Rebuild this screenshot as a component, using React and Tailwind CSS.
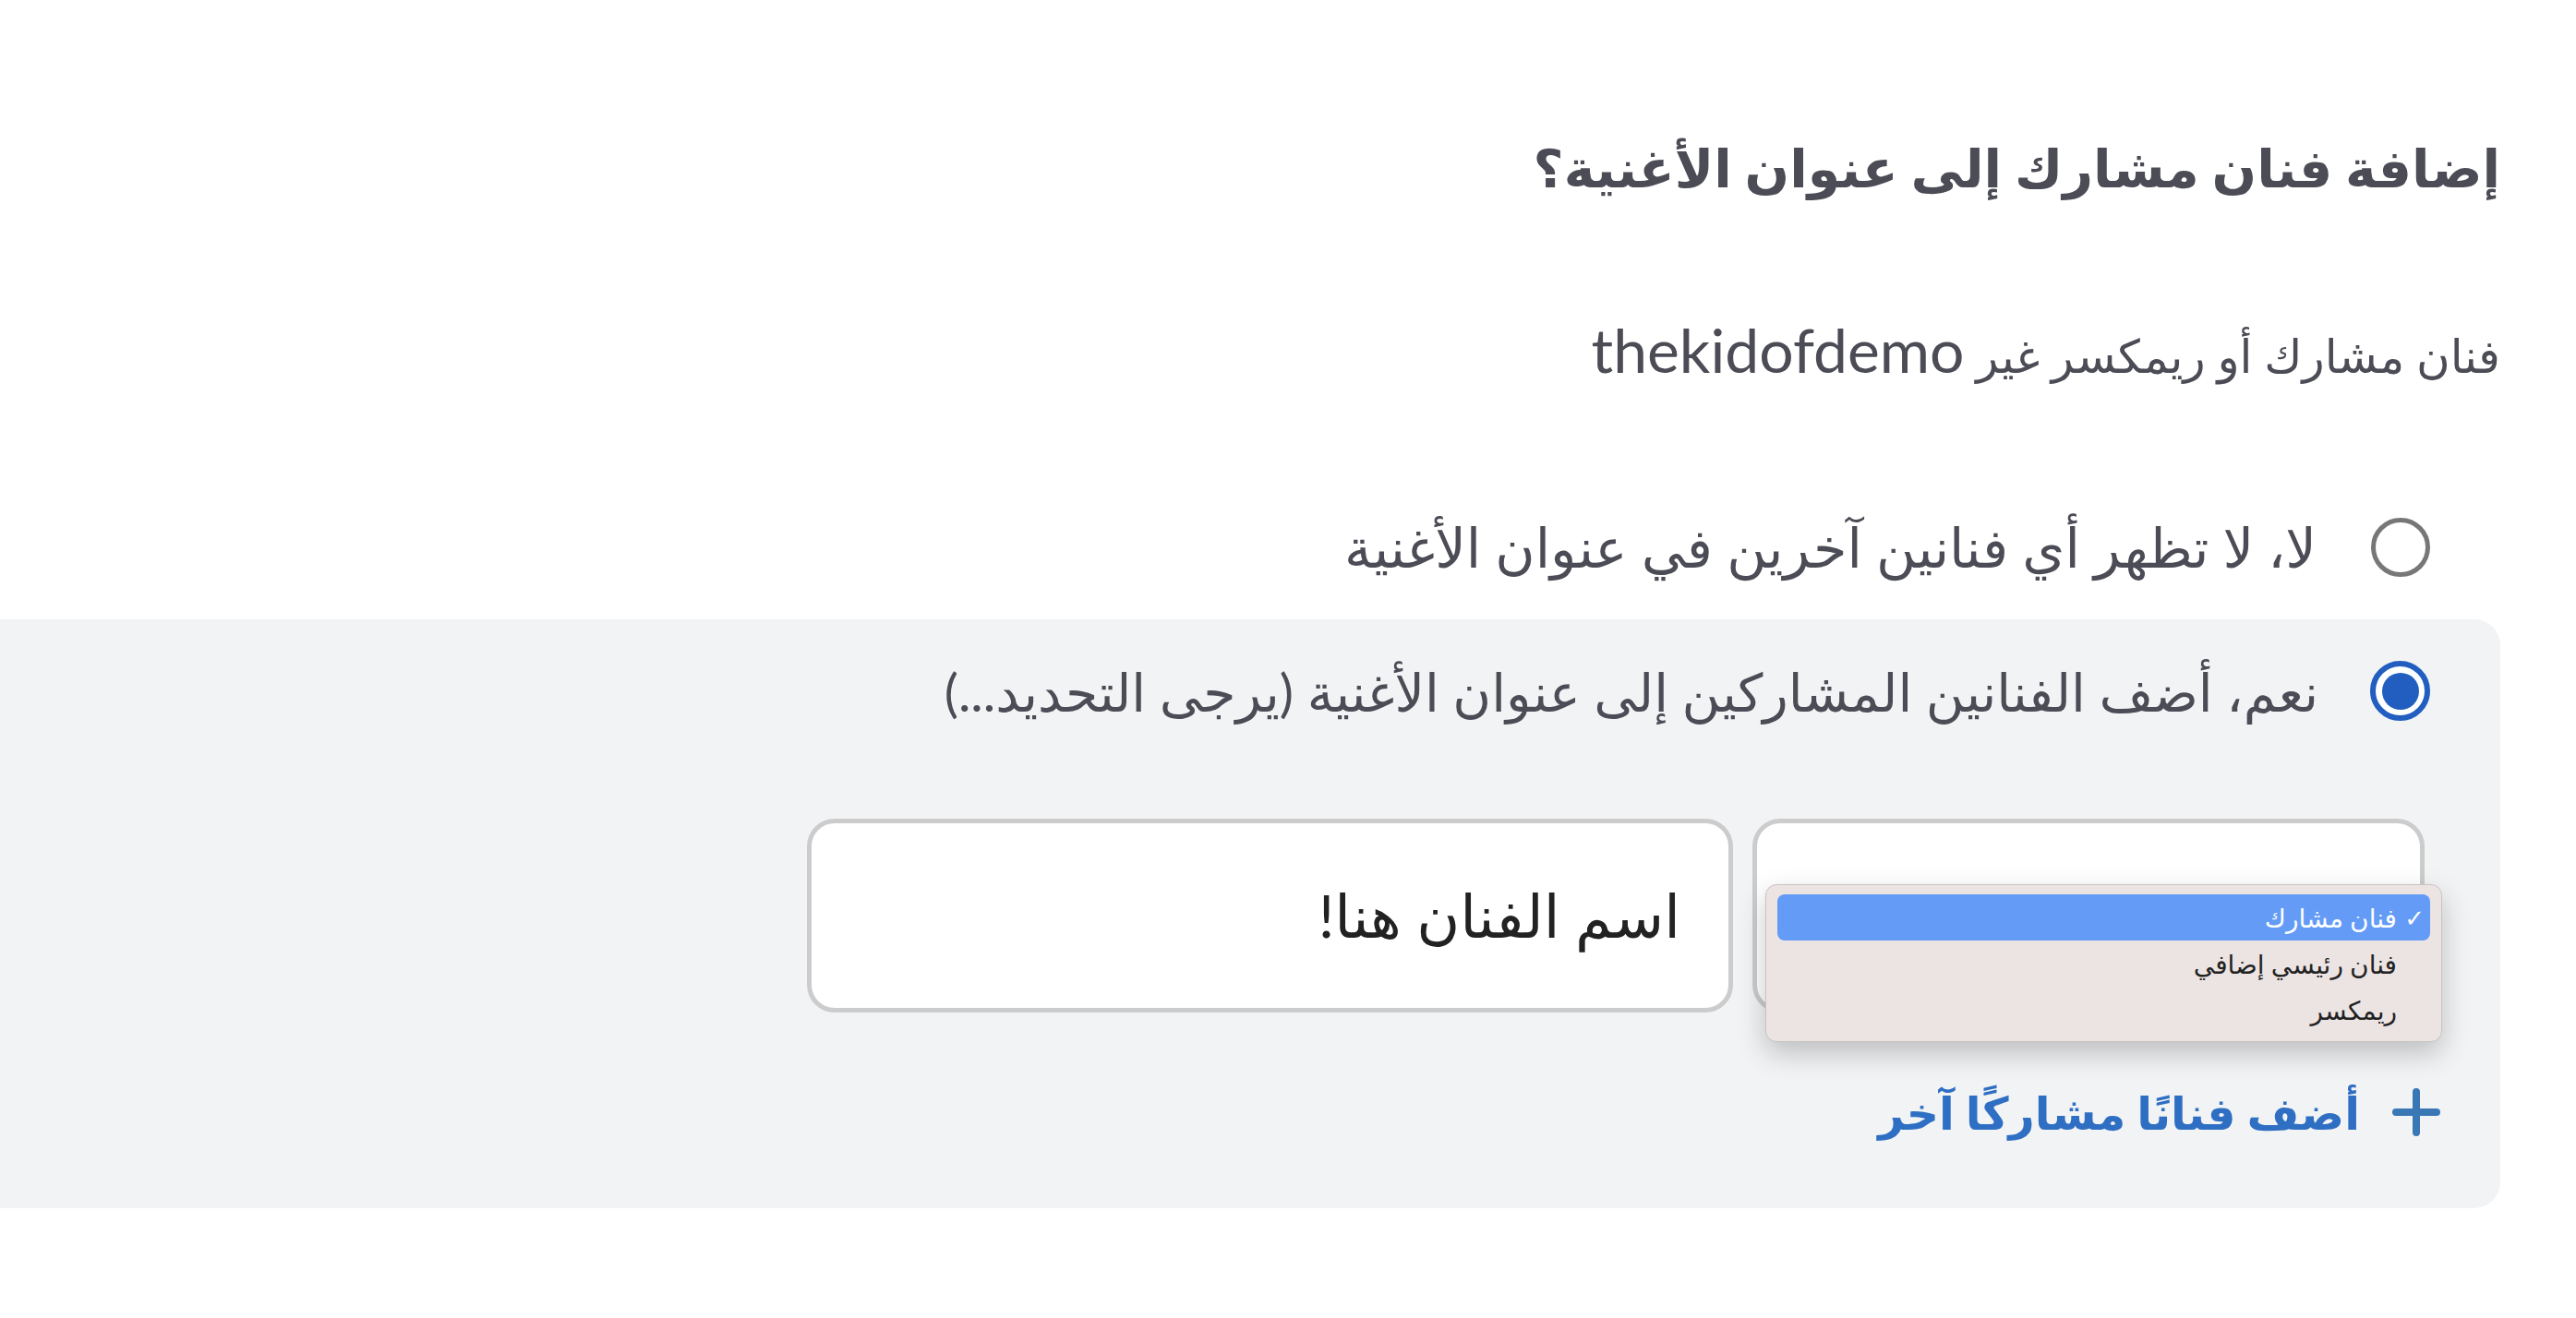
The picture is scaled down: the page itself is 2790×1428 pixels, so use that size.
import React, { useState } from 'react';

const roles = ['فنان مشارك', 'فنان رئيسي إضافي', 'ريمكسر'];

const PlusIcon = () => (
  <svg width="56" height="56" viewBox="0 0 56 56" fill="none">
    <path d="M28 6v44M6 28h44" stroke="#3a78b5" strokeWidth="8" strokeLinecap="round" />
  </svg>
);

const App = () => {
  const [featuring, setFeaturing] = useState('yes');
  const [role, setRole] = useState(0);

  return (
    <div dir="rtl" className="min-h-screen bg-white font-['Lato','DejaVu_Sans',sans-serif] text-[#4b4c55]">
      <div className="mr-[82px] pt-[136px]">
        {/* Title */}
        <h1 className="text-[57px] leading-[90px] font-bold">إضافة فنان مشارك إلى عنوان الأغنية؟</h1>
        <p className="mt-[113px] text-[50px] leading-[80px]">
          فنان مشارك أو ريمكسر غير <span className="text-[66px]">thekidofdemo</span>
        </p>

        {/* Option: no */}
        <div
          onClick={() => setFeaturing('no')}
          className="mt-[136px] flex items-center gap-[59px] pr-[76px] h-[64px] cursor-pointer"
        >
          <span className="w-[64px] h-[64px] shrink-0 rounded-full border-[5px] border-[#777777] bg-white" />
          <span className="text-[59px] leading-[64px]">لا، لا تظهر أي فنانين آخرين في عنوان الأغنية</span>
        </div>

        {/* Option: yes */}
        <div className="mt-[46px] bg-[#f2f3f5] rounded-tr-[28px] rounded-br-[28px] pt-[45px] pr-[76px] pb-[76px]">
          <div
            onClick={() => setFeaturing('yes')}
            className="flex items-center gap-[56px] h-[65px] cursor-pointer"
          >
            <span className="w-[65px] h-[65px] shrink-0 rounded-full border-[6px] border-[#215ebf] bg-white flex items-center justify-center">
              {featuring === 'yes' && <span className="w-[40px] h-[40px] rounded-full bg-[#215ebf]" />}
            </span>
            <span className="text-[57px] leading-[64px]">نعم، أضف الفنانين المشاركين إلى عنوان الأغنية (يرجى التحديد...)</span>
          </div>

          <div className="mt-[106px] mr-[6px] flex gap-[21px]">
            <div className="relative w-[728px] h-[210px] shrink-0 rounded-[30px] border-[5px] border-[#cccccc] bg-white">
              {/* open role menu */}
              <div className="absolute top-[66px] right-[-24px] w-[733px] h-[171px] z-10 rounded-[12px] border border-[#c9c3c2] bg-[#ece4e3] shadow-[0_12px_30px_rgba(0,0,0,0.22)] py-[10px] px-[12px]">
                {roles.map((r, i) => (
                  <div
                    key={r}
                    onClick={() => setRole(i)}
                    className={`flex items-center h-[50px] rounded-[8px] text-[28px] leading-[50px] cursor-default ${
                      role === i ? 'bg-[#639bf6] text-white' : 'text-[#222222]'
                    }`}
                  >
                    <span className="w-[36px] pr-[6px] text-[26px]">{role === i ? '✓' : ''}</span>
                    <span>{r}</span>
                  </div>
                ))}
              </div>
            </div>
            <div className="w-[1003px] h-[210px] shrink-0 rounded-[30px] border-[5px] border-[#cccccc] bg-white flex items-center pr-[52px] text-[64px] text-[#222222]">
              اسم الفنان هنا!
            </div>
          </div>

          <button className="mt-[80px] -mr-[13px] flex items-center gap-[33px] text-[#2f6fc3] font-bold text-[49px] leading-[56px]">
            <PlusIcon />
            <span>أضف فنانًا مشاركًا آخر</span>
          </button>
        </div>
      </div>
    </div>
  );
};

export default App;
